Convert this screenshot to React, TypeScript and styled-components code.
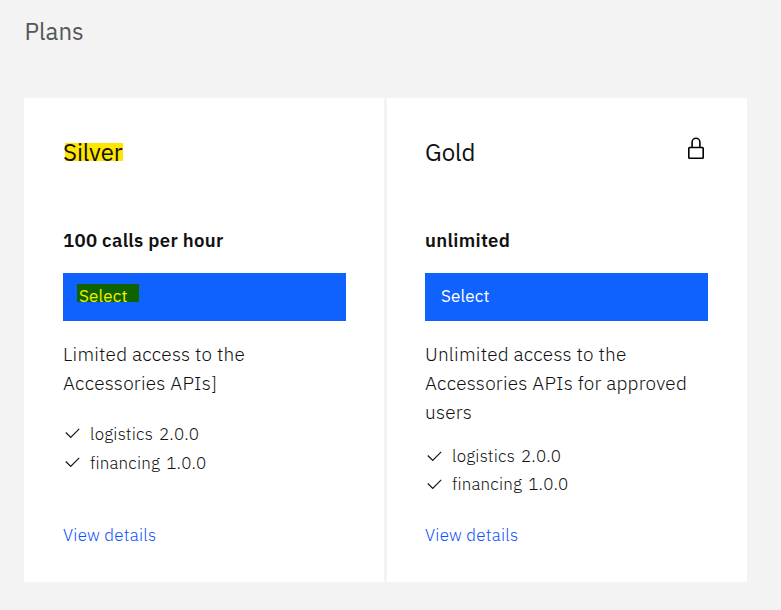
import React from "react";
import styled, { createGlobalStyle } from "styled-components";

const GlobalStyle = createGlobalStyle`
  * { box-sizing: border-box; }
  body {
    margin: 0;
    background: #f3f3f3;
    color: #111;
    font-family: "IBM Plex Sans", "Noto Sans", sans-serif;
  }
`;

const Page = styled.main`
  height: 610px;
  padding: 16px 34px 0 24px;
  background: #f3f3f3;
  overflow: hidden;
`;

const PageTitle = styled.h1`
  margin: 0 0 52px 0.5px;
  font-size: 24px;
  font-weight: 400;
  line-height: 30px;
  color: #565656;
`;

const Plans = styled.div`
  display: grid;
  grid-template-columns: 360px 360px;
  gap: 3px;
`;

const Card = styled.section`
  display: flex;
  flex-direction: column;
  height: 484px;
  padding: 38px 38px 33px 39px;
  background: #fff;

  & + & {
    padding-right: 39px;
    padding-left: 38px;
  }
`;

const CardHeader = styled.header`
  display: flex;
  justify-content: space-between;
  height: 90px;
`;

const PlanName = styled.h2<{ $marked?: boolean }>`
  align-self: flex-start;
  margin: 0;
  font-size: 24px;
  font-weight: 400;
  line-height: 32px;
  letter-spacing: -0.05px;
  background: ${(p) =>
    p.$marked ? "linear-gradient(#ffe600, #ffe600) 2px 7px / 100% 18px no-repeat" : "none"};
`;

const LockSvg = styled.svg`
  display: block;
  margin-right: 2px;
`;

const Limit = styled.div`
  height: 47px;
  font-size: 18.6px;
  font-weight: 600;
  line-height: 28px;
  letter-spacing: 0.31px;
`;

const SelectButton = styled.button`
  display: flex;
  align-items: flex-start;
  flex: none;
  height: 48px;
  padding: 11px 14px 0;
  border: 0;
  background: #0f62fe;
  font: 400 17px/24px "IBM Plex Sans", "Noto Sans", sans-serif;
  letter-spacing: 0.16px;
`;

const ButtonLabel = styled.span<{ $marked?: boolean }>`
  width: 62px;
  height: 18px;
  padding-left: 2px;
  line-height: 24px;
  text-align: left;
  color: ${(p) => (p.$marked ? "#f0f000" : "#fff")};
  background: ${(p) => (p.$marked ? "#0f6200" : "none")};
`;

const Description = styled.p`
  margin: 19px 0 0;
  font-size: 19px;
  font-weight: 300;
  line-height: 29px;
  letter-spacing: 0.23px;
  white-space: nowrap;
`;

const Apis = styled.ul<{ $compact?: boolean }>`
  display: grid;
  grid-auto-rows: ${(p) => (p.$compact ? "28px" : "29px")};
  margin: ${(p) => (p.$compact ? "15px" : "21px")} 0 0;
  padding: 0;
  list-style: none;
`;

const Api = styled.li`
  display: flex;
  align-items: center;
  font-size: 17px;
  font-weight: 300;
  letter-spacing: 0.17px;
`;

const CheckSvg = styled.svg`
  flex: none;
  margin-right: 8px;
`;

const Version = styled.span`
  margin-left: 6px;
`;

const Details = styled.a`
  margin-top: auto;
  color: #0f50fe;
  font-size: 17px;
  font-weight: 300;
  line-height: 28px;
  letter-spacing: 0.24px;
`;

const Lock = () => (
  <LockSvg width="20" height="24" viewBox="0 0 20 24" fill="none" stroke="#000" strokeWidth="1.6">
    <path d="M6.1 11.5V6.2a3.9 3.9 0 0 1 7.8 0v5.3" />
    <rect x="2.8" y="11.5" width="14.4" height="10.8" rx="0.8" />
  </LockSvg>
);

const Check = () => (
  <CheckSvg width="19" height="19" viewBox="0 0 32 32" fill="#171717">
    <path d="M13 24 4 15l1.414-1.414L13 21.171 26.586 7.586 28 9z" />
  </CheckSvg>
);

type Plan = {
  name: string;
  limit: string;
  lines: string[];
  highlighted?: boolean;
  locked?: boolean;
};

const apis = [
  { name: "logistics", version: "2.0.0" },
  { name: "financing", version: "1.0.0" },
];

const plans: Plan[] = [
  {
    name: "Silver",
    limit: "100 calls per hour",
    lines: ["Limited access to the", "Accessories APIs]"],
    highlighted: true,
  },
  {
    name: "Gold",
    limit: "unlimited",
    lines: ["Unlimited access to the", "Accessories APIs for approved", "users"],
    locked: true,
  },
];

export default function App() {
  return (
    <>
      <GlobalStyle />
      <Page>
        <PageTitle>Plans</PageTitle>
        <Plans>
          {plans.map((plan) => (
            <Card key={plan.name}>
              <CardHeader>
                <PlanName $marked={plan.highlighted}>{plan.name}</PlanName>
                {plan.locked && <Lock />}
              </CardHeader>
              <Limit>{plan.limit}</Limit>
              <SelectButton>
                <ButtonLabel $marked={plan.highlighted}>Select</ButtonLabel>
              </SelectButton>
              <Description>
                {plan.lines.map((line, i) => (
                  <React.Fragment key={line}>
                    {i > 0 && <br />}
                    {line}
                  </React.Fragment>
                ))}
              </Description>
              <Apis $compact={plan.lines.length > 2}>
                {apis.map((api) => (
                  <Api key={api.name}>
                    <Check />
                    <span>{api.name}</span>
                    <Version>{api.version}</Version>
                  </Api>
                ))}
              </Apis>
              <Details>View details</Details>
            </Card>
          ))}
        </Plans>
      </Page>
    </>
  );
}
